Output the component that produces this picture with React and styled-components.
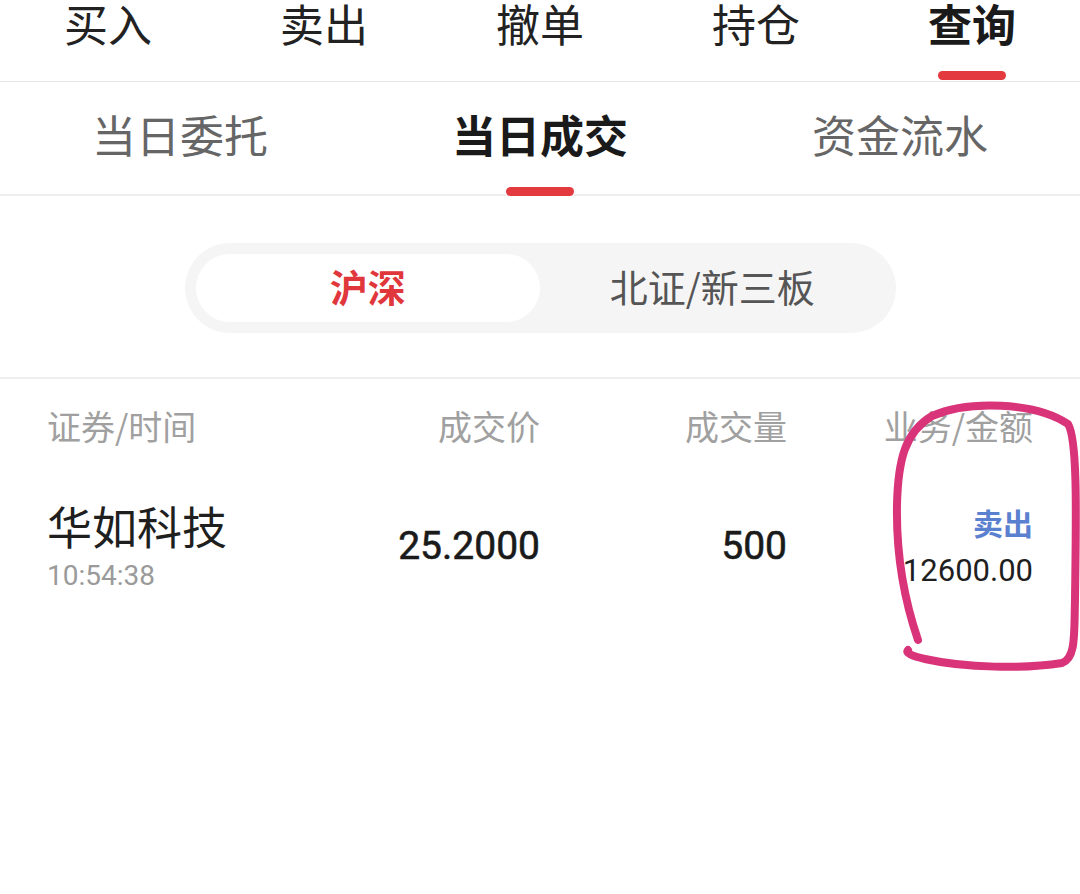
import styled, { createGlobalStyle } from 'styled-components';

const GlobalStyle = createGlobalStyle`
    html, body {
        margin: 0;
        padding: 0;
        background: #ffffff;
    }
    body {
        font-family: "Noto Sans CJK SC", "Noto Sans", sans-serif;
        color: #222;
    }
`;

const Page = styled.div`
    position: relative;
    width: 1080px;
    height: 894px;
    overflow: hidden;
    background: #fff;
`;

const TopBar = styled.div`
    display: grid;
    grid-template-columns: repeat(5, 1fr);
    height: 81px;
    border-bottom: 1px solid #e6e6e6;
`;

const SubBar = styled.div`
    display: grid;
    grid-template-columns: repeat(3, 1fr);
    height: 112px;
    border-bottom: 2px solid #eeeeee;
`;

const Tab = styled.div`
    display: flex;
    flex-direction: column;
    align-items: center;
    padding-top: ${(p) => p.top}px;
    font-size: 44px;
    line-height: 46px;
    font-weight: ${(p) => (p.active ? 700 : 400)};
    color: ${(p) => (p.active ? '#1a1a1a' : p.muted ? '#666' : '#222')};
`;

const Underline = styled.span`
    display: block;
    width: 68px;
    height: 9px;
    border-radius: 5px;
    margin-top: ${(p) => p.gap}px;
    background: ${(p) => (p.show ? '#e23a3f' : 'transparent')};
`;

const SegmentArea = styled.div`
    display: flex;
    justify-content: center;
    padding: 47px 0 44px;
    border-bottom: 2px solid #eeeeee;
`;

const Segment = styled.div`
    display: flex;
    width: 711px;
    height: 90px;
    padding: 11px;
    box-sizing: border-box;
    border-radius: 45px;
    background: #f5f5f5;
`;

const SegmentItem = styled.div`
    flex: 1;
    display: flex;
    align-items: center;
    justify-content: center;
    padding-bottom: 5px;
    box-sizing: border-box;
    border-radius: 34px;
    font-size: 38px;
    font-weight: ${(p) => (p.active ? 700 : 400)};
    color: ${(p) => (p.active ? '#e0373c' : '#555')};
    background: ${(p) => (p.active ? '#fff' : 'transparent')};
`;

const Row = styled.div`
    display: grid;
    grid-template-columns: 260px 233px 247px 246px;
    align-items: center;
    padding: ${(p) => p.pad};
`;

const HeadCell = styled.div`
    font-size: 34px;
    line-height: 40px;
    color: #a0a0a0;
    text-align: ${(p) => (p.left ? 'left' : 'right')};
`;

const NameCell = styled.div`
    display: flex;
    flex-direction: column;
    gap: 7px;
`;

const StockName = styled.div`
    font-size: 45px;
    line-height: 53px;
    color: #1f1f1f;
`;

const TimeText = styled.div`
    font-family: Roboto, "Noto Sans", sans-serif;
    font-size: 28px;
    line-height: 34px;
    color: #9a9a9a;
`;

const Num = styled.div`
    font-family: Roboto, "Noto Sans", sans-serif;
    font-size: 39px;
    font-weight: 400;
    color: #1a1a1a;
    text-align: right;
    -webkit-text-stroke: 0.6px #1a1a1a;
`;

const BizCell = styled.div`
    display: flex;
    flex-direction: column;
    align-items: flex-end;
    gap: 15px;
`;

const BizType = styled.div`
    font-size: 30px;
    line-height: 34px;
    font-weight: 700;
    color: #5b80cf;
`;

const Amount = styled.div`
    font-family: Roboto, "Noto Sans", sans-serif;
    font-size: 31px;
    line-height: 34px;
    color: #1f1f1f;
`;

const Scribble = styled.svg`
    position: absolute;
    left: 0;
    top: 0;
    pointer-events: none;
`;

const topTabs = ['买入', '卖出', '撤单', '持仓', '查询'];
const subTabs = ['当日委托', '当日成交', '资金流水'];

export default function App() {
    return (
        <Page>
            <GlobalStyle />
            <TopBar>
                {topTabs.map((t, i) => (
                    <Tab key={t} top={0} active={i === 4}>
                        {t}
                        <Underline gap={25} show={i === 4} />
                    </Tab>
                ))}
            </TopBar>
            <SubBar>
                {subTabs.map((t, i) => (
                    <Tab key={t} top={29} active={i === 1} muted>
                        {t}
                        <Underline gap={30} show={i === 1} />
                    </Tab>
                ))}
            </SubBar>
            <SegmentArea>
                <Segment>
                    <SegmentItem active>沪深</SegmentItem>
                    <SegmentItem>北证/新三板</SegmentItem>
                </Segment>
            </SegmentArea>
            <Row pad="27px 47px 0">
                <HeadCell left>证券/时间</HeadCell>
                <HeadCell>成交价</HeadCell>
                <HeadCell>成交量</HeadCell>
                <HeadCell>业务/金额</HeadCell>
            </Row>
            <Row pad="53px 47px 0">
                <NameCell>
                    <StockName>华如科技</StockName>
                    <TimeText>10:54:38</TimeText>
                </NameCell>
                <Num>25.2000</Num>
                <Num>500</Num>
                <BizCell>
                    <BizType>卖出</BizType>
                    <Amount>12600.00</Amount>
                </BizCell>
            </Row>
            <Scribble width="1080" height="894" viewBox="0 0 1080 894">
                <path
                    d="M918 640 C906 605 896 560 897 505 C898 460 905 432 932 416 C968 400 1035 402 1068 424 C1078 440 1076 520 1075 600 C1074 635 1076 658 1062 663 C1025 669 965 668 925 659 C912 656 905 653 908 650"
                    fill="none"
                    stroke="#d9347a"
                    strokeWidth="8"
                    strokeLinecap="round"
                    strokeLinejoin="round"
                />
            </Scribble>
        </Page>
    );
}
